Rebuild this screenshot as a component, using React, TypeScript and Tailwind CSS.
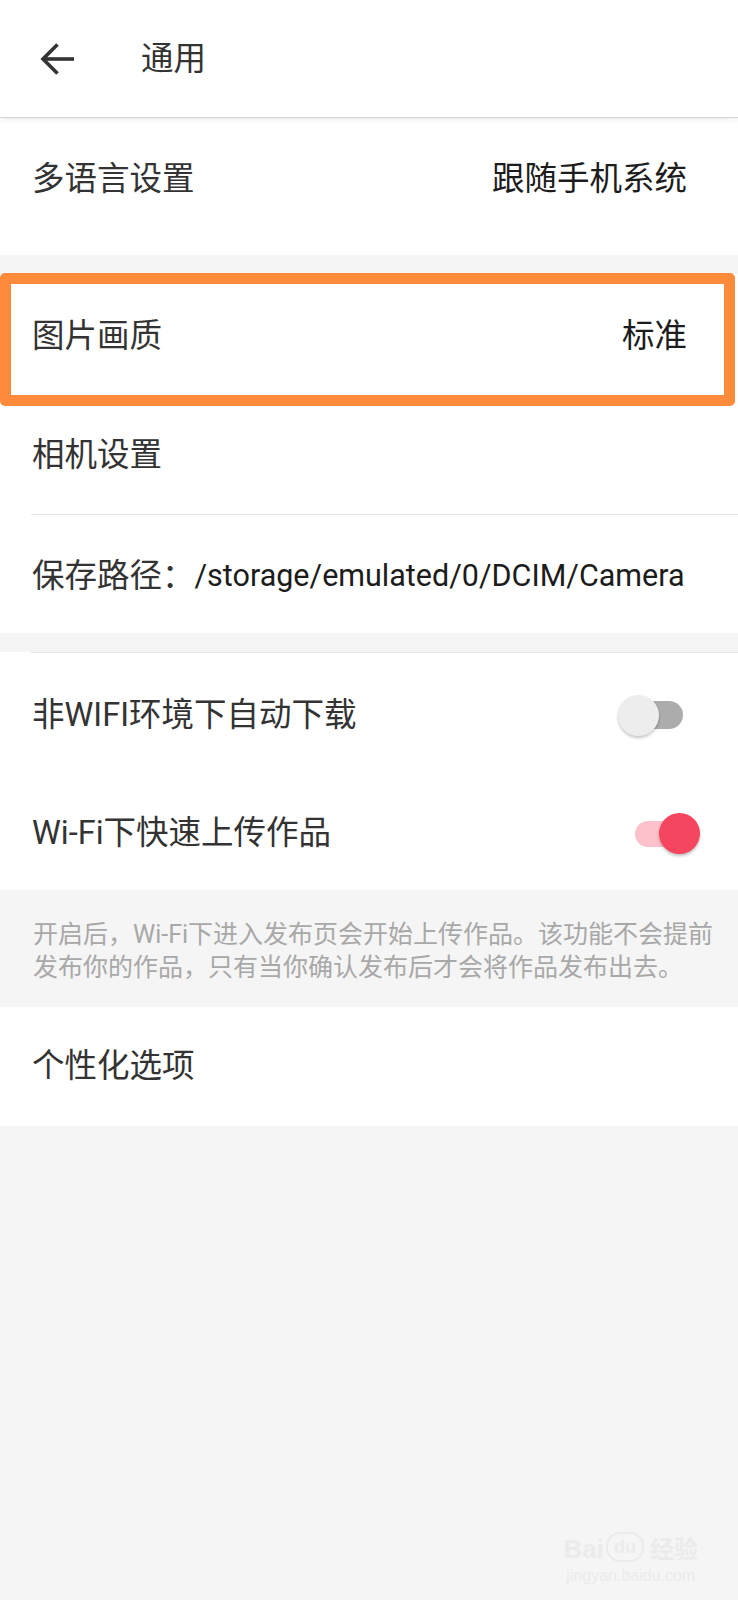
import React from 'react';

const FONT = "font-['Roboto','Noto_Sans_CJK_SC',sans-serif]";

function BackArrow() {
  return (
    <svg width="36" height="36" viewBox="0 0 36 36" fill="none" className="text-[#333]">
      <path d="M35 18H4" stroke="currentColor" strokeWidth="3.6" />
      <path d="M18.5 3.5L4 18l14.5 14.5" stroke="currentColor" strokeWidth="3.6" />
    </svg>
  );
}

function Toggle({ on }: { on: boolean }) {
  if (on) {
    return (
      <div className="relative w-[65px] h-[41px] mr-[6px]">
        <div className="absolute left-0 top-[8px] w-[55px] h-[26px] rounded-full bg-[#fcc1ca]" />
        <div className="absolute right-0 top-0 w-[41px] h-[41px] rounded-full bg-[#f6455f] shadow-[0_2px_3px_rgba(0,0,0,0.25)]" />
      </div>
    );
  }
  return (
    <div className="relative w-[65px] h-[41px] mr-[23px]">
      <div className="absolute left-[10px] top-[6px] w-[55px] h-[28px] rounded-full bg-[#acacac]" />
      <div className="absolute left-0 top-0 w-[41px] h-[41px] rounded-full bg-[#ededed] shadow-[0_2px_3px_rgba(0,0,0,0.22)]" />
    </div>
  );
}

export default function App() {
  return (
    <div className={`relative min-h-[1600px] bg-[#f5f5f5] ${FONT}`}>
      {/* Header */}
      <header className="relative z-10 h-[118px] bg-white border-b border-[#d4d4d4] shadow-[0_2px_6px_rgba(0,0,0,0.07)] flex items-center pt-[1px]">
        <div className="ml-[39px]">
          <BackArrow />
        </div>
        <h1 className="ml-[66px] text-[32.5px] text-[#333] leading-none">通用</h1>
      </header>

      {/* Language */}
      <div className="h-[137px] bg-white flex items-center justify-between pl-[32px] pr-[51px] pb-[14px]">
        <span className="text-[32.5px] text-[#333] leading-none">多语言设置</span>
        <span className="text-[32.5px] text-[#1c1c1c] leading-none">跟随手机系统</span>
      </div>

      {/* Picture & camera */}
      <div className="mt-[19px] bg-white">
        <div className="relative h-[131px] flex items-center justify-between pl-[32px] pr-[51px] pb-[7px]">
          <span className="text-[32.5px] text-[#333] leading-none">图片画质</span>
          <span className="text-[32.5px] text-[#1c1c1c] leading-none">标准</span>
          <div className="absolute left-0 top-[-1px] w-[735px] h-[133px] border-[11px] border-[#fd8b3b] rounded-[5px]" />
        </div>
        <div className="h-[109px] flex items-center pl-[32px] pb-[9px]">
          <span className="text-[32.5px] text-[#333] leading-none">相机设置</span>
        </div>
        <div className="ml-[31px] h-px bg-[#e6e6e6]" />
        <div className="h-[118px] flex items-center pl-[32px] pt-[4px]">
          <span className="text-[32.5px] text-[#333] leading-none">保存路径：</span>
          <span className="text-[30.5px] text-[#1c1c1c] leading-none">/storage/emulated/0/DCIM/Camera</span>
        </div>
      </div>

      {/* Toggles */}
      <div className="mt-[19px] bg-white">
        <div className="ml-[31px] h-px bg-[#e4e4e4]" />
        <div className="h-[121px] flex items-center justify-between px-[32px] pt-[3px]">
          <span className="text-[32.5px] text-[#333] leading-none">非WIFI环境下自动下载</span>
          <Toggle on={false} />
        </div>
        <div className="h-[116px] flex items-center justify-between px-[32px] pt-[2px]">
          <span className="text-[32.5px] text-[#333] leading-none">Wi-Fi下快速上传作品</span>
          <Toggle on={true} />
        </div>
      </div>

      {/* Note */}
      <div className="h-[117px] pt-[28px] px-[33px] text-[25px] leading-[33px] text-[#a8a8a8] whitespace-nowrap">
        <p>开启后，Wi-Fi下进入发布页会开始上传作品。该功能不会提前</p>
        <p>发布你的作品，只有当你确认发布后才会将作品发布出去。</p>
      </div>

      {/* Personalisation */}
      <div className="h-[119px] bg-white flex items-center pl-[32px]">
        <span className="text-[32.5px] text-[#333] leading-none">个性化选项</span>
      </div>

      {/* Watermark */}
      <div className="absolute right-[40px] bottom-[16px] flex flex-col items-center text-[#ebebeb] select-none">
        <div className="flex items-end gap-[2px] leading-none">
          <span className="text-[26px] font-bold font-['Liberation_Sans',sans-serif]">Bai</span>
          <span className="w-[38px] h-[30px] rounded-[14px] border-2 border-[#ebebeb] text-[18px] font-bold flex items-center justify-center font-['Liberation_Sans',sans-serif]">du</span>
          <span className="text-[24px] font-bold ml-[4px]">经验</span>
        </div>
        <span className="mt-[6px] text-[16px] leading-none font-['Liberation_Sans',sans-serif]">jingyan.baidu.com</span>
      </div>
    </div>
  );
}
